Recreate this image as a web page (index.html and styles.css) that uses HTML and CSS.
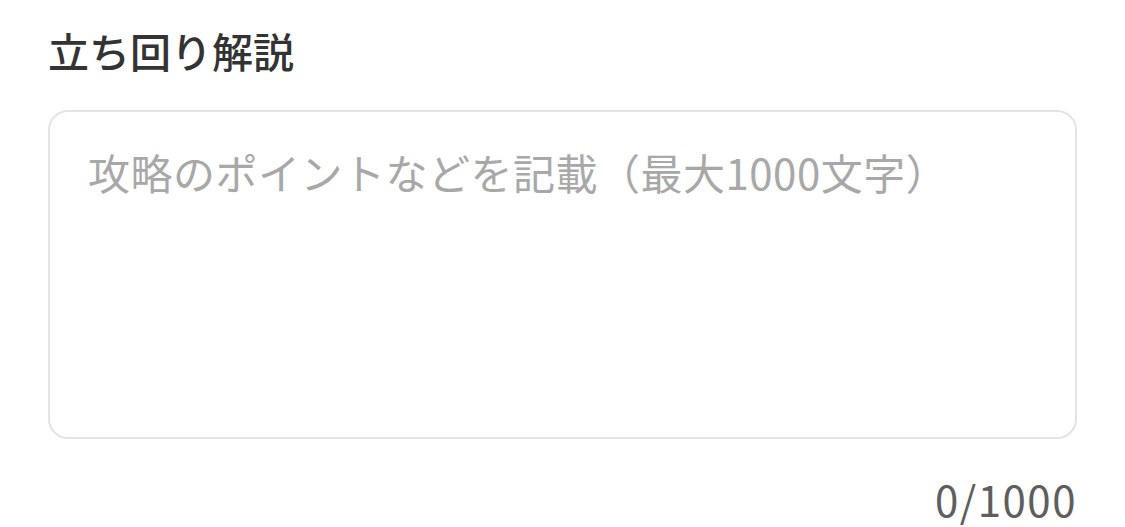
FILE: index.html
```html
<!DOCTYPE html>
<html lang="ja">
<head>
  <meta charset="UTF-8">
  <meta name="viewport" content="width=device-width, initial-scale=1.0">
  <title>立ち回り解説</title>
  <link rel="stylesheet" href="styles.css">
</head>
<body>
  <div class="field">
    <label class="field-label" for="guide">立ち回り解説</label>
    <textarea id="guide" class="field-input" maxlength="1000" placeholder="攻略のポイントなどを記載（最大1000文字）"></textarea>
    <p class="field-count"><span id="count">0</span>/1000</p>
  </div>

  <script>
    const guide = document.getElementById('guide');
    guide.addEventListener('input', () => {
      document.getElementById('count').textContent = guide.value.length;
    });
  </script>
</body>
</html>
```

FILE: styles.css
```css
body {
  margin: 0;
  background: #fff;
  font-family: "Noto Sans CJK JP", "Noto Sans", sans-serif;
}
.field {
  padding: 22px 48px 0;
  display: flex;
  flex-direction: column;
}
.field-label {
  font-size: 41px;
  font-weight: 500;
  color: #333;
  line-height: 56px;
  margin-bottom: 32px;
}
.field-input {
  box-sizing: border-box;
  width: 100%;
  height: 329px;
  padding: 32px 38px;
  border: 2px solid #e4e4e4;
  border-radius: 20px;
  font-family: inherit;
  font-size: 42px;
  line-height: 56px;
  letter-spacing: 0.5px;
  color: #333;
  resize: none;
  outline: none;
}
.field-input::placeholder {
  color: #a8a8a8;
}
.field-count {
  margin: 32px 0 0;
  text-align: right;
  font-size: 42px;
  line-height: 56px;
  letter-spacing: 1.5px;
  color: #5e5e5e;
}
```
